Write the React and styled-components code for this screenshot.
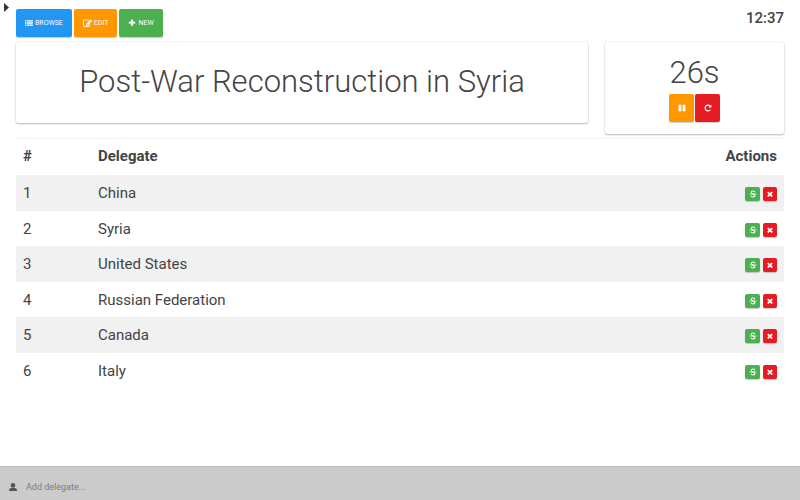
import React from "react";
import styled, { createGlobalStyle } from "styled-components";

const GlobalStyle = createGlobalStyle`
  *, *::before, *::after { box-sizing: border-box; }
  body { margin: 0; background: #fff; color: #444; font-family: Roboto, sans-serif; }
  button, input { font-family: inherit; }
`;

const palette = {
  blue: "#2196f3",
  orange: "#ff9800",
  green: "#4caf50",
  red: "#e51c23",
};

const Page = styled.div`
  display: flex;
  flex-direction: column;
  min-height: 100vh;
`;

const Header = styled.header`
  display: flex;
  align-items: flex-start;
  padding: 0 16px 0 4px;
`;

const DrawerToggle = styled.button`
  display: flex;
  width: 12px;
  margin-top: 3px;
  padding: 0;
  border: 0;
  background: none;
  color: #333;
`;

const Toolbar = styled.nav`
  display: flex;
  flex: 1;
  gap: 2px;
  padding-top: 9px;
`;

const Button = styled.button`
  display: inline-flex;
  align-items: center;
  justify-content: center;
  gap: 2px;
  height: 28px;
  padding: 0 9px;
  border: 0;
  border-radius: 2px;
  background: ${(p) => palette[p.$tone]};
  color: #fff;
  font-size: 7px;
  text-transform: uppercase;
  box-shadow: 0 1px 1px rgba(0, 0, 0, 0.2);
  cursor: pointer;
`;

const TimerButton = styled(Button)`
  width: 25px;
  padding: 0;
`;

const RowButton = styled(Button)`
  width: ${(p) => (p.$tone === "green" ? "15px" : "14px")};
  height: 14px;
  padding: 0;
`;

const Clock = styled.time`
  padding-top: 9px;
  font-size: 15px;
  line-height: 18px;
  font-weight: 500;
`;

const Main = styled.main`
  flex: 1;
  padding: 5px 16px 0;
`;

const Panels = styled.div`
  display: grid;
  grid-template-columns: minmax(0, 572fr) minmax(0, 179fr);
  align-items: start;
  gap: 17px;
  margin-bottom: 4px;
`;

const Card = styled.section`
  display: flex;
  flex-direction: column;
  align-items: center;
  padding: ${(p) => (p.$timer ? "10px 8px 12px" : "20px 8px 21px")};
  border-radius: 2px;
  background: #fff;
  box-shadow: 0 0 1px rgba(0, 0, 0, 0.25), 0 1px 2px rgba(0, 0, 0, 0.26);
`;

const Title = styled.h1`
  margin: 0;
  font-size: 31px;
  line-height: 40px;
  font-weight: 300;
  white-space: nowrap;
`;

const Countdown = styled(Title)`
  line-height: 42px;
`;

const ButtonPair = styled.div`
  display: flex;
  justify-content: flex-end;
  gap: ${(p) => (p.$wide ? "3px" : "1px")};
  padding-top: ${(p) => (p.$wide ? "2px" : "0")};
`;

const Table = styled.table`
  width: 100%;
  border-top: 1px solid #f2f2f2;
  border-collapse: separate;
  border-spacing: 0;
  table-layout: fixed;
  font-size: 15px;
  line-height: 18px;
`;

const Row = styled.tr`
  height: 35px;
  &:nth-child(odd) {
    height: 36px;
  }
  tbody &:nth-child(odd) {
    background: #f1f1f1;
  }
`;

const Cell = styled.td`
  padding: 0 7px;
  text-align: left;
  vertical-align: middle;
`;

const HeadCell = styled(Cell)`
  width: ${(p) => p.$width || "auto"};
  padding-bottom: 2px;
  font-weight: 700;
  text-align: ${(p) => p.$align || "left"};
`;

const AddBar = styled.footer`
  display: flex;
  align-items: center;
  gap: 9px;
  height: 34px;
  padding: 7px 9px 0;
  border-top: 1px solid #c2c2c2;
  background: #cbcbcb;
`;

const AddLabel = styled.label`
  display: flex;
  color: #555;
`;

const AddInput = styled.input`
  flex: 1;
  padding: 0;
  border: 0;
  outline: 0;
  background: transparent;
  color: #444;
  font-size: 9px;
  line-height: 12px;
  &::placeholder {
    color: #7c7c7c;
    opacity: 1;
  }
`;

const glyphs = {
  list: "M0 256h256v224H0zM384 256h1408v224H384zM0 608h256v224H0zM384 608h1408v224H384zM0 960h256v224H0zM384 960h1408v224H384zM0 1312h256v224H0zM384 1312h1408v224H384z",
  edit: "M888 1184l116-116-152-152-116 116v56h96v96h56zm440-720q-16-16-33 1l-350 350q-17 17-1 33t33-1l350-350q17-17 1-33zm80 594v190q0 119-84.5 203.5t-203.5 84.5h-832q-119 0-203.5-84.5t-84.5-203.5v-832q0-119 84.5-203.5t203.5-84.5h832q63 0 117 25 15 7 18 23 3 17-9 29l-49 49q-14 14-32 8-23-6-45-6h-832q-66 0-113 47t-47 113v832q0 66 47 113t113 47h832q66 0 113-47t47-113v-126q0-13 9-22l64-64q15-15 35-7t20 29zm-96-738l288 288-672 672h-288v-288zm444 132l-92 92-288-288 92-92q28-28 68-28t68 28l152 152q28 28 28 68t-28 68z",
  plus: "M1600 736v192q0 40-28 68t-68 28h-416v416q0 40-28 68t-68 28h-192q-40 0-68-28t-28-68v-416h-416q-40 0-68-28t-28-68v-192q0-40 28-68t68-28h416v-416q0-40 28-68t68-28h192q40 0 68 28t28 68v416h416q40 0 68 28t28 68z",
  pause: "M120 192h640v1408H120zM1032 192h640v1408H1032z",
  repeat: "M1664 256v448q0 26-19 45t-45 19h-448q-42 0-59-40-17-39 14-69l138-138q-148-137-349-137-104 0-198.5 40.5t-163.5 109.5-109.5 163.5-40.5 198.5 40.5 198.5 109.5 163.5 163.5 109.5 198.5 40.5q119 0 225-52t179-147q7-10 23-12 15 0 25 9l137 138q9 8 9.5 20.5t-7.5 22.5q-109 132-264 204.5t-327 72.5q-156 0-298-61t-245-164-164-245-61-298 61-298 164-245 245-164 298-61q147 0 284.5 55.5t244.5 156.5l130-129q29-31 70-14 39 17 39 59z",
  close: "M1490 1322q0 40-28 68l-136 136q-28 28-68 28t-68-28l-294-294-294 294q-28 28-68 28t-68-28l-136-136q-28-28-28-68t28-68l294-294-294-294q-28-28-28-68t28-68l136-136q28-28 68-28t68 28l294 294 294-294q28-28 68-28t68 28l136 136q28 28 28 68t-28 68l-294 294 294 294q28 28 28 68z",
};

const strokes = { edit: 50, plus: 60 };

function Glyph({ name, size = 8 }) {
  return (
    <svg
      width={size}
      height={size}
      viewBox="0 0 1792 1792"
      fill="currentColor"
      stroke="currentColor"
      strokeWidth={strokes[name] || 0}
      aria-hidden="true"
    >
      <path d={glyphs[name]} />
    </svg>
  );
}

function StrikeIcon() {
  return (
    <svg width="8" height="8" viewBox="0 0 16 16" fill="none" stroke="currentColor" aria-hidden="true">
      <path d="M12 4.5C10.8 1.2 4.4 1.4 4.4 4.9C4.4 8 11.8 7.8 11.8 11.2C11.8 14.8 4.8 14.8 3.8 11.2" strokeWidth="2.2" />
      <path d="M1 8H15" strokeWidth="1.5" />
    </svg>
  );
}

const delegates = ["China", "Syria", "United States", "Russian Federation", "Canada", "Italy"];

export default function App() {
  return (
    <Page>
      <GlobalStyle />
      <Header>
        <DrawerToggle type="button" aria-label="Open menu">
          <svg width="5" height="9" viewBox="0 0 5 9" fill="currentColor" aria-hidden="true">
            <path d="M0 0L5 4.5L0 9Z" />
          </svg>
        </DrawerToggle>
        <Toolbar>
          <Button type="button" $tone="blue"><Glyph name="list" />Browse</Button>
          <Button type="button" $tone="orange"><Glyph name="edit" size={9} />Edit</Button>
          <Button type="button" $tone="green"><Glyph name="plus" />New</Button>
        </Toolbar>
        <Clock>12:37</Clock>
      </Header>
      <Main>
        <Panels>
          <Card><Title>Post-War Reconstruction in Syria</Title></Card>
          <Card $timer>
            <Countdown as="div" role="timer">26s</Countdown>
            <ButtonPair>
              <TimerButton type="button" $tone="orange" aria-label="Pause"><Glyph name="pause" /></TimerButton>
              <TimerButton type="button" $tone="red" aria-label="Restart"><Glyph name="repeat" /></TimerButton>
            </ButtonPair>
          </Card>
        </Panels>
        <Table>
          <thead>
            <Row>
              <HeadCell as="th" scope="col" $width="75px">#</HeadCell>
              <HeadCell as="th" scope="col">Delegate</HeadCell>
              <HeadCell as="th" scope="col" $width="90px" $align="right">Actions</HeadCell>
            </Row>
          </thead>
          <tbody>
            {delegates.map((name, i) => (
              <Row key={name}>
                <Cell>{i + 1}</Cell>
                <Cell>{name}</Cell>
                <Cell>
                  <ButtonPair $wide>
                    <RowButton type="button" $tone="green" aria-label={`Strike ${name}`}><StrikeIcon /></RowButton>
                    <RowButton type="button" $tone="red" aria-label={`Remove ${name}`}><Glyph name="close" /></RowButton>
                  </ButtonPair>
                </Cell>
              </Row>
            ))}
          </tbody>
        </Table>
      </Main>
      <AddBar>
        <AddLabel htmlFor="delegate" aria-label="Add delegate">
          <svg width="8" height="8" viewBox="0 0 8 8" fill="currentColor" aria-hidden="true">
            <circle cx="4" cy="2.4" r="2.3" />
            <path d="M0 8V6.8Q0 5 2.4 5H5.6Q8 5 8 6.8V8Z" />
          </svg>
        </AddLabel>
        <AddInput id="delegate" type="text" placeholder="Add delegate..." />
      </AddBar>
    </Page>
  );
}
